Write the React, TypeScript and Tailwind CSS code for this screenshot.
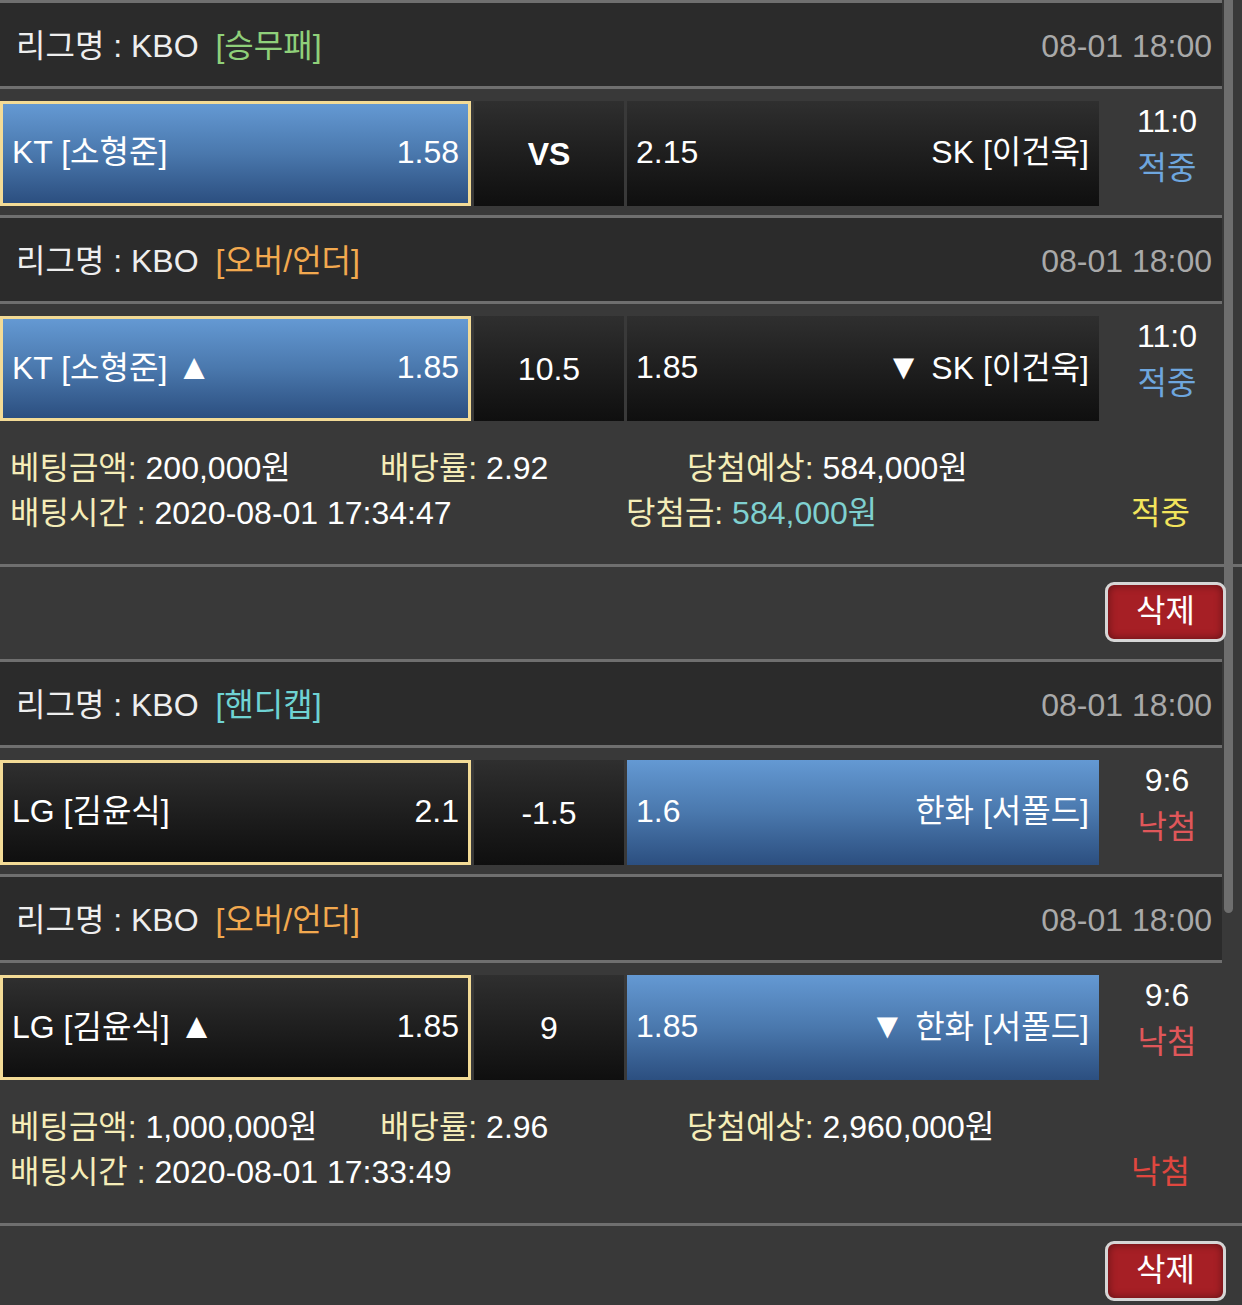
import React from "react";

type Side = {
  name: string;
  odds: string;
  picked?: boolean;
  won?: boolean;
  arrow?: "up" | "down";
};

interface Game {
  tag: string;
  tagColor: string;
  date: string;
  left: Side;
  mid: string;
  midBold?: boolean;
  right: Side;
  score: string;
  result: "적중" | "낙첨";
}

interface Bet {
  games: Game[];
  amount: string;
  rate: string;
  expected: string;
  time: string;
  prize?: string;
  result: "적중" | "낙첨";
}

const bets: Bet[] = [
  {
    games: [
      {
        tag: "[승무패]",
        tagColor: "text-[#8fd07a]",
        date: "08-01 18:00",
        left: { name: "KT [소형준]", odds: "1.58", picked: true, won: true },
        mid: "VS",
        midBold: true,
        right: { name: "SK [이건욱]", odds: "2.15" },
        score: "11:0",
        result: "적중",
      },
      {
        tag: "[오버/언더]",
        tagColor: "text-[#f2a94f]",
        date: "08-01 18:00",
        left: { name: "KT [소형준]", odds: "1.85", picked: true, won: true, arrow: "up" },
        mid: "10.5",
        right: { name: "SK [이건욱]", odds: "1.85", arrow: "down" },
        score: "11:0",
        result: "적중",
      },
    ],
    amount: "200,000원",
    rate: "2.92",
    expected: "584,000원",
    time: "2020-08-01 17:34:47",
    prize: "584,000원",
    result: "적중",
  },
  {
    games: [
      {
        tag: "[핸디캡]",
        tagColor: "text-[#6fd3d3]",
        date: "08-01 18:00",
        left: { name: "LG [김윤식]", odds: "2.1", picked: true },
        mid: "-1.5",
        right: { name: "한화 [서폴드]", odds: "1.6", won: true },
        score: "9:6",
        result: "낙첨",
      },
      {
        tag: "[오버/언더]",
        tagColor: "text-[#f2a94f]",
        date: "08-01 18:00",
        left: { name: "LG [김윤식]", odds: "1.85", picked: true, arrow: "up" },
        mid: "9",
        right: { name: "한화 [서폴드]", odds: "1.85", won: true, arrow: "down" },
        score: "9:6",
        result: "낙첨",
      },
    ],
    amount: "1,000,000원",
    rate: "2.96",
    expected: "2,960,000원",
    time: "2020-08-01 17:33:49",
    result: "낙첨",
  },
];

const blue = "bg-gradient-to-b from-[#6499d3] via-[#4a78ad] to-[#2c4f80]";
const dark = "bg-gradient-to-b from-[#2f2f2f] to-[#0f0f0f]";

function Line({ full }: { full?: boolean }) {
  return <div className={full ? "h-[3px] w-full bg-[#6f6f6f]" : "h-[3px] w-[1222px] bg-[#6f6f6f]"} />;
}

function GameRows({ game }: { game: Game }) {
  const l = game.left;
  const r = game.right;
  return (
    <>
      <Line />
      <div className="flex h-[83px] w-[1222px] items-center justify-between bg-[#2b2b2b] pl-4 pr-[10px] pt-[3px]">
        <div className="text-[#eeeeee]">
          리그명 : KBO <span className={`ml-[8px] ${game.tagColor}`}>{game.tag}</span>
        </div>
        <div className="text-[#a9a9a9]">{game.date}</div>
      </div>
      <Line />
      <div className="flex h-[126px] w-[1222px] pt-3">
        <div
          className={`flex h-[105px] w-[471px] items-center justify-between px-[9px] pb-[3px] text-white ${
            l.won ? blue : dark
          } ${l.picked ? "border-[3px] border-[#f3db96]" : ""}`}
        >
          <span>
            {l.name}
            {l.arrow === "up" && <span className="ml-[9px] text-[36px]">▲</span>}
          </span>
          <span>{l.odds}</span>
        </div>
        <div
          className={`ml-[3px] flex h-[105px] w-[150px] items-center justify-center text-white ${dark} ${
            game.midBold ? "font-bold" : ""
          }`}
        >
          {game.mid}
        </div>
        <div
          className={`ml-[3px] flex h-[105px] w-[472px] items-center justify-between pl-[9px] pr-[10px] pb-[3px] text-white ${
            r.won ? blue : dark
          }`}
        >
          <span>{r.odds}</span>
          <span>
            {r.arrow === "down" && <span className="mr-[10px] text-[36px]">▼</span>}
            {r.name}
          </span>
        </div>
        <div className="-mt-[3px] flex flex-1 flex-col items-center pl-[13px] leading-[47px]">
          <span className="text-white">{game.score}</span>
          <span className={game.result === "적중" ? "text-[#6ea6de]" : "text-[#e0575a]"}>{game.result}</span>
        </div>
      </div>
    </>
  );
}

function BetBlock({ bet }: { bet: Bet }) {
  const label = "text-[#f5edb8]";
  return (
    <>
      {bet.games.map((g, i) => (
        <GameRows key={i} game={g} />
      ))}
      <div className="h-[134px] w-[1222px] pl-[10px] pt-4 leading-[45px] text-white">
        <div className="flex">
          <div className="w-[370px]">
            <span className={label}>베팅금액:</span> {bet.amount}
          </div>
          <div className="w-[307px]">
            <span className={label}>배당률:</span> {bet.rate}
          </div>
          <div>
            <span className={label}>당첨예상:</span> {bet.expected}
          </div>
        </div>
        <div className="flex">
          <div className="w-[616px]">
            <span className={label}>배팅시간 :</span> {bet.time}
          </div>
          <div className="w-[505px]">
            {bet.prize && (
              <>
                <span className={label}>당첨금:</span> <span className="text-[#7fd0d0]">{bet.prize}</span>
              </>
            )}
          </div>
          <div className={bet.result === "적중" ? "text-[#f2e45c]" : "text-[#e0473f]"}>{bet.result}</div>
        </div>
      </div>
      <Line full />
      <div className="flex h-[92px] w-full justify-end pr-[16px] pt-[15px]">
        <button className="relative z-10 flex h-[60px] w-[121px] items-center justify-center rounded-[9px] border-[3px] border-[#d6d6d6] bg-[#a61f25] pb-[2px] text-white shadow-[inset_0_0_8px_rgba(0,0,0,0.45)]">
          삭제
        </button>
      </div>
    </>
  );
}

export default function App() {
  return (
    <div
      className="relative h-[1305px] w-[1242px] overflow-hidden bg-[#393939] text-[32px] leading-[40px]"
      style={{ fontFamily: '"Liberation Sans", Roboto, "Noto Sans CJK KR", sans-serif' }}
    >
      {bets.map((b, i) => (
        <BetBlock key={i} bet={b} />
      ))}
      <div className="absolute left-[1224px] top-0 h-[913px] w-[9px] rounded-b-full bg-[#6e6e6e]" />
    </div>
  );
}
